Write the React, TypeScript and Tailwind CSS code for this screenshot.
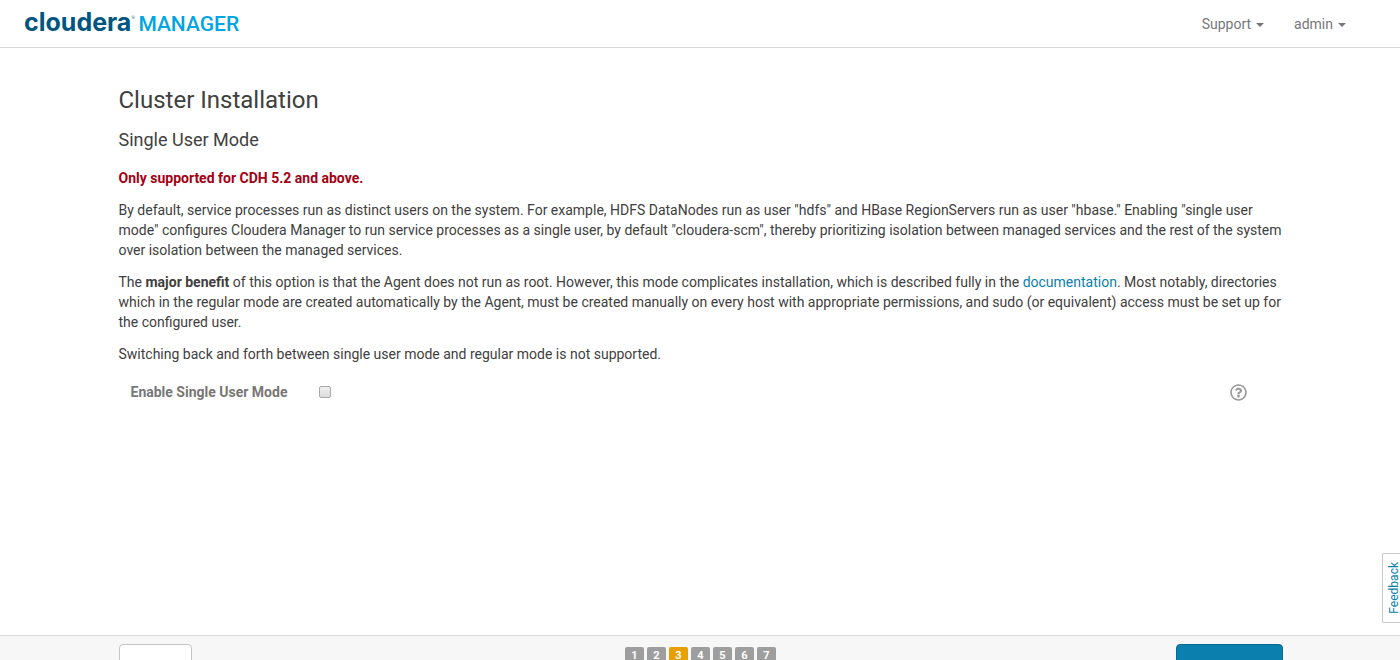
import { FaRegQuestionCircle } from "react-icons/fa";

const steps = [1, 2, 3, 4, 5, 6, 7];
const currentStep = 3;

function Logo() {
  return (
    <a href="#home" aria-label="Cloudera Manager" className="flex items-baseline pb-0.5 leading-8">
      <span className="font-['Inter'] text-[25px] leading-8 font-bold text-[#00567f]">cloudera</span>
      <span className="w-[7px] self-start pt-1 text-[4px] leading-4 text-[#00567f]">®</span>
      <span className="text-[21px] font-medium text-[#00a5e3]">MANAGER</span>
    </a>
  );
}

function NavMenu({ label }: { label: string }) {
  return (
    <button type="button" className="flex items-center gap-[5px] text-[#777777]">
      {label}
      <svg width="8" height="4" viewBox="0 0 8 4" className="mt-0.5" aria-hidden="true">
        <path d="M0 0h8L4 4z" fill="currentColor" />
      </svg>
    </button>
  );
}

export default function App() {
  return (
    <div className="relative flex h-screen flex-col overflow-hidden bg-white font-['Roboto',sans-serif] text-sm leading-5 text-[#404040]">
      <header className="flex h-12 shrink-0 items-center justify-between border-b border-[#d9d9d9] pr-[54px] pl-6">
        <Logo />
        <nav className="flex gap-[30px]">
          <NavMenu label="Support" />
          <NavMenu label="admin" />
        </nav>
      </header>

      <main className="flex-1 pt-9 pl-px">
        <div className="mx-auto max-w-[1164px]">
          <h1 className="text-2xl leading-8">Cluster Installation</h1>
          <h2 className="mt-2 text-lg leading-8">Single User Mode</h2>
          <p className="mt-3 font-bold text-[#a30014]">Only supported for CDH 5.2 and above.</p>
          <p className="mt-3">
            By default, service processes run as distinct users on the system. For example, HDFS DataNodes run as user
            "hdfs" and HBase RegionServers run as user "hbase." Enabling "single user mode" configures Cloudera Manager
            to run service processes as a single user, by default "cloudera-scm", thereby prioritizing isolation between
            managed services and the rest of the system over isolation between the managed services.
          </p>
          <p className="mt-3">
            The <strong className="font-bold">major benefit</strong> of this option is that the Agent does not run as
            root. However, this mode complicates installation, which is described fully in the{" "}
            <a href="#documentation" className="text-[#0b7fad]">
              documentation
            </a>
            . Most notably, directories which in the regular mode are created automatically by the Agent, must be
            created manually on every host with appropriate permissions, and sudo (or equivalent) access must be set up
            for the configured user.
          </p>
          <p className="mt-3">Switching back and forth between single user mode and regular mode is not supported.</p>
          <div className="mt-[18px] flex items-center pr-9 pl-3">
            <label htmlFor="single-user" className="w-[188px] font-bold text-[#777777]">
              Enable Single User Mode
            </label>
            <input
              id="single-user"
              type="checkbox"
              className="size-3 appearance-none rounded-xs border border-[#a9a9a9] bg-linear-to-b from-[#efefef] to-[#dcdcdc] checked:bg-[#0b7fad]"
            />
            <button type="button" aria-label="Help" className="ml-auto text-[#999999]">
              <FaRegQuestionCircle size={17} />
            </button>
          </div>
        </div>
      </main>

      <button
        type="button"
        className="absolute right-0 bottom-[37px] flex h-[70px] w-[18px] items-center justify-center rounded-l-xs border border-r-0 border-[#c8c8c8] bg-white pl-1 text-xs leading-4 text-[#0b7fad]"
      >
        <span className="rotate-180 [writing-mode:vertical-rl]">Feedback</span>
      </button>

      <footer className="h-[25px] shrink-0 overflow-hidden border-t border-[#d9d9d9] bg-[#f7f7f7] pl-px">
        <div className="mx-auto flex max-w-[1164px] items-start justify-between pt-2">
          <div className="flex flex-1">
            <button
              type="button"
              aria-label="Back"
              className="h-9 w-[73px] rounded-sm border border-[#c4c4c4] bg-white"
            />
          </div>
          <ol className="flex gap-[3px] pt-[3px]">
            {steps.map((step) => (
              <li
                key={step}
                className={`flex h-[18px] w-[19px] items-center justify-center rounded-xs text-[11px] leading-4 font-bold text-white ${
                  step === currentStep ? "bg-[#e99f00]" : "bg-[#9e9e9e]"
                }`}
              >
                {step}
              </li>
            ))}
          </ol>
          <div className="flex flex-1 justify-end">
            <button
              type="button"
              aria-label="Continue"
              className="h-9 w-[107px] rounded-sm border border-[#096a91] bg-[#0b7fad]"
            />
          </div>
        </div>
      </footer>
    </div>
  );
}
